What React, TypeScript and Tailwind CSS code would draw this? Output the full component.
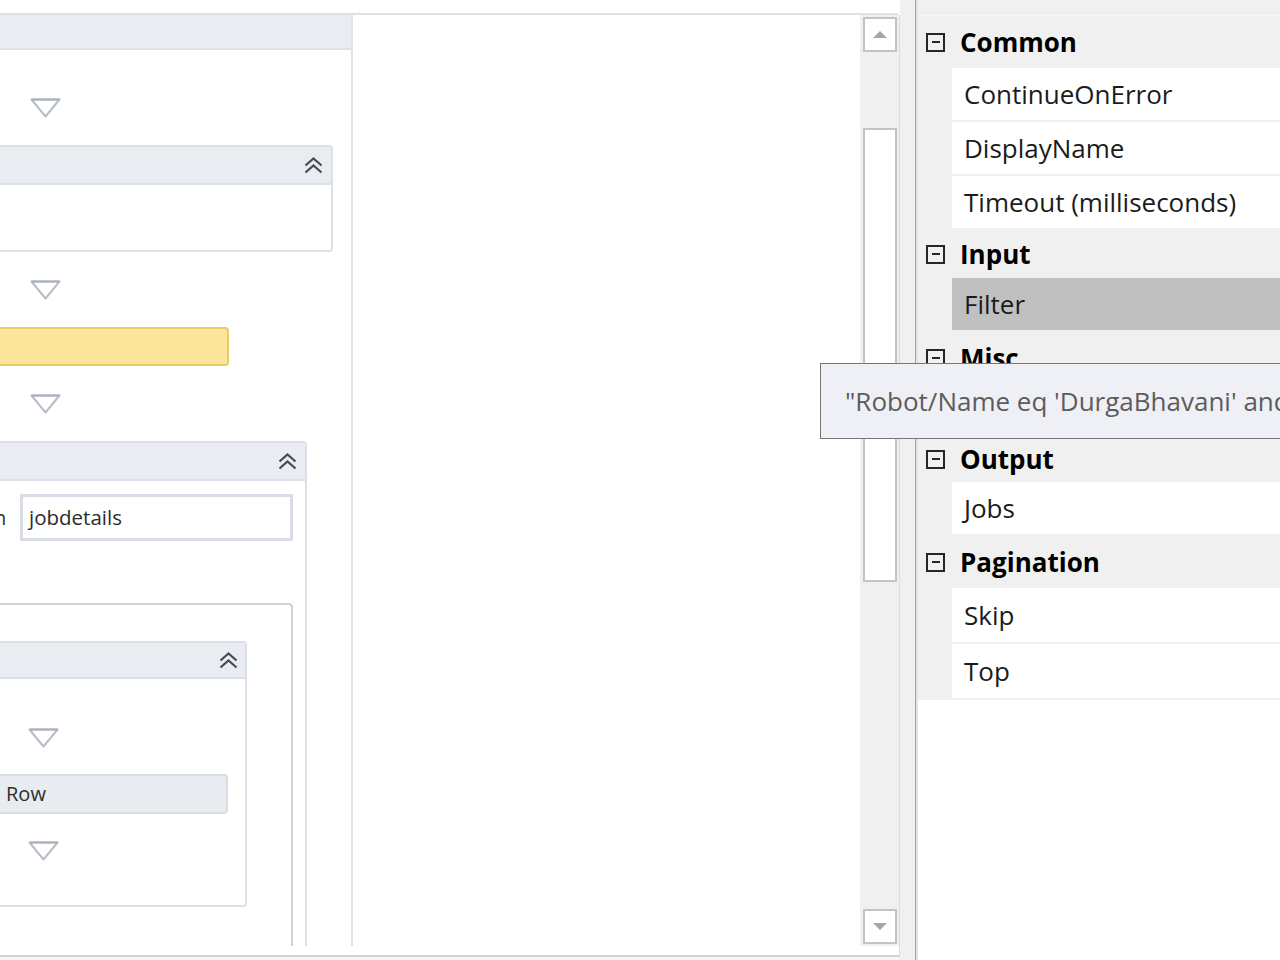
import React from "react";

function Tri({ className = "" }: { className?: string }) {
  return (
    <svg className={className} width="31" height="20" viewBox="0 0 31 20">
      <polygon points="1.5,1.5 29.5,1.5 15.5,18.5" fill="none" stroke="#b7bec8" strokeWidth="2" strokeLinejoin="round" />
      <line x1="1.5" y1="1.5" x2="29.5" y2="1.5" stroke="#a9b1bc" strokeWidth="2" />
    </svg>
  );
}

function Chevrons() {
  return (
    <svg width="21" height="19" viewBox="0 0 21 19">
      <polyline points="2.5,9.5 10.5,2.5 18.5,9.5" fill="none" stroke="#434b59" strokeWidth="2.2" />
      <polyline points="2.5,16.5 10.5,9.5 18.5,16.5" fill="none" stroke="#434b59" strokeWidth="2.2" />
    </svg>
  );
}

function Minus() {
  return (
    <div className="w-[19px] h-[19px] border-2 border-[#262626] flex items-center justify-center shrink-0">
      <div className="w-[8px] h-[2px] bg-[#262626]" />
    </div>
  );
}

function Category({ label, h }: { label: string; h: string }) {
  return (
    <div className={`flex items-center bg-[#f0f0f0] ${h}`}>
      <div className="ml-[8px]">
        <Minus />
      </div>
      <div className="ml-[15px] font-bold text-[26px] text-black leading-none">{label}</div>
    </div>
  );
}

function Prop({ label, h, selected = false }: { label: string; h: string; selected?: boolean }) {
  return (
    <div className={`flex ${h}`}>
      <div className="w-[34px] bg-[#f0f0f0] shrink-0" />
      <div className="flex-1 flex flex-col">
        <div className={`flex-1 flex items-center pl-[12px] text-[26px] text-[#1b1b1b] leading-none ${selected ? "bg-[#c0c0c0]" : "bg-white"}`}>
          {label}
        </div>
        <div className="h-[2px] bg-[#f0f0f0]" />
      </div>
    </div>
  );
}

function ScrollArrow({ up }: { up: boolean }) {
  return (
    <div className="ml-[3px] w-[34px] h-[35px] border-2 border-[#c3c3c3] bg-white flex items-center justify-center">
      {up ? (
        <div className="w-0 h-0 border-l-[7px] border-r-[7px] border-b-[7px] border-l-transparent border-r-transparent border-b-[#a6a6a6]" />
      ) : (
        <div className="w-0 h-0 border-l-[7px] border-r-[7px] border-t-[7px] border-l-transparent border-r-transparent border-t-[#a6a6a6]" />
      )}
    </div>
  );
}

export default function App() {
  return (
    <div className="relative w-[1280px] h-[960px] overflow-hidden flex bg-white font-['Open_Sans','Noto_Sans',sans-serif]">
      {/* Left pane */}
      <div className="w-[900px] h-full flex flex-col shrink-0">
        <div className="h-[13px] bg-white" />
        <div className="h-[2px] bg-[#dde1e8] mr-[2px]" />
        <div className="h-[931px] flex">
          {/* Canvas */}
          <div className="flex-1 h-full overflow-hidden bg-white">
            <div className="w-[353px] h-full border-r-2 border-[#dfe3ea] flex flex-col">
              <div className="h-[35px] bg-[#e9ecf0] border-b-2 border-[#dde1e7] shrink-0" />
              <Tri className="mt-[48px] ml-[30px] shrink-0" />
              {/* Box 2 */}
              <div className="mt-[27px] w-[333px] border-2 border-l-0 border-[#dde0e6] rounded-r-[4px] shrink-0">
                <div className="h-[38px] bg-[#e9ecf0] border-b-2 border-[#dde0e6] flex items-center justify-end pr-[7px] rounded-tr-[3px]">
                  <Chevrons />
                </div>
                <div className="h-[65px] bg-white rounded-br-[3px]" />
              </div>
              <Tri className="mt-[28px] ml-[30px] shrink-0" />
              <div className="mt-[27px] w-[229px] h-[39px] bg-[#fde69c] border-2 border-l-0 border-[#ecca69] rounded-r-[4px] shrink-0" />
              <Tri className="mt-[28px] ml-[30px] shrink-0" />
              {/* Box 3 */}
              <div className="mt-[27px] w-[307px] flex-1 border-t-2 border-r-2 border-[#dde0e6] rounded-tr-[4px] flex flex-col min-h-0">
                <div className="h-[38px] bg-[#e9ecf0] border-b-2 border-[#dde0e6] flex items-center justify-end pr-[7px] shrink-0 rounded-tr-[3px]">
                  <Chevrons />
                </div>
                <div className="mt-[13px] h-[47px] flex items-center shrink-0">
                  <span className="text-[20px] text-[#333] w-[20px] -ml-[6px] leading-none">n</span>
                  <div className="ml-[6px] w-[273px] h-[47px] border-[3px] border-[#d8dce5] p-[2px] bg-white">
                    <div className="w-full h-full bg-white flex items-center pl-[4px] text-[20.5px] text-[#2b2b2b] leading-none">
                      jobdetails
                    </div>
                  </div>
                </div>
                {/* inner box */}
                <div className="mt-[62px] w-[293px] flex-1 border-t-2 border-r-2 border-[#d2d2d2] rounded-tr-[4px] flex flex-col">
                  <div className="mt-[36px] w-[247px] border-2 border-l-0 border-[#dde0e6] rounded-r-[4px] flex flex-col">
                    <div className="h-[36px] bg-[#e9ecf0] border-b-2 border-[#dde0e6] flex items-center justify-end pr-[6px] rounded-tr-[3px]">
                      <Chevrons />
                    </div>
                    <div className="h-[226px] flex flex-col">
                      <Tri className="mt-[49px] ml-[28px] shrink-0" />
                      <div className="mt-[26px] w-[228px] h-[40px] bg-[#e8ebef] border-2 border-l-0 border-[#d9dde4] rounded-r-[4px] flex items-center pl-[6px] text-[20px] text-[#2f2f2f] leading-none">
                        Row
                      </div>
                      <Tri className="mt-[27px] ml-[28px] shrink-0" />
                    </div>
                  </div>
                </div>
              </div>
            </div>
          </div>
          {/* Scrollbar */}
          <div className="w-[40px] h-full bg-[#f0f0f0] border-r border-[#dcdcdc] flex flex-col">
            <div className="mt-[2px]">
              <ScrollArrow up />
            </div>
            <div className="mt-[76px] ml-[3px] w-[34px] h-[454px] border-2 border-[#c3c3c3] bg-white" />
            <div className="mt-auto mb-[2px]">
              <ScrollArrow up={false} />
            </div>
          </div>
        </div>
        <div className="h-[9px] bg-white border-r border-[#dcdcdc]" />
        <div className="h-[2px] bg-[#d3d3d3]" />
        <div className="flex-1 bg-[#f4f4f4]" />
      </div>

      {/* Splitter */}
      <div className="w-[15px] h-full bg-[#f0f0f0] shrink-0" />
      <div className="w-px h-full bg-[#a3a3a3] shrink-0" />
      <div className="w-[2px] h-full bg-[#e4e4e4] shrink-0" />

      {/* Properties */}
      <div className="flex-1 h-full flex flex-col bg-white">
        <div className="h-[15px] bg-[#f0f0f0]" />
        <div className="h-px bg-[#f8f8f8]" />
        <Category label="Common" h="h-[52px]" />
        <Prop label="ContinueOnError" h="h-[54px]" />
        <Prop label="DisplayName" h="h-[54px]" />
        <Prop label="Timeout (milliseconds)" h="h-[54px]" />
        <Category label="Input" h="h-[48px]" />
        <Prop label="Filter" h="h-[54px]" selected />
        <Category label="Misc" h="h-[52px]" />
        <Prop label="" h="h-[52px]" />
        <Category label="Output" h="h-[46px]" />
        <Prop label="Jobs" h="h-[54px]" />
        <Category label="Pagination" h="h-[52px]" />
        <Prop label="Skip" h="h-[56px]" />
        <Prop label="Top" h="h-[56px]" />
        <div className="flex-1 bg-white" />
      </div>

      {/* Tooltip */}
      <div className="absolute left-[820px] top-[363px] w-[520px] h-[76px] bg-[#eff0f5] border border-[#767676] flex items-center pl-[24px] text-[26px] text-[#5c5c5c] whitespace-nowrap leading-none">
        "Robot/Name eq 'DurgaBhavani' and State eq 'Running'"
      </div>
    </div>
  );
}
